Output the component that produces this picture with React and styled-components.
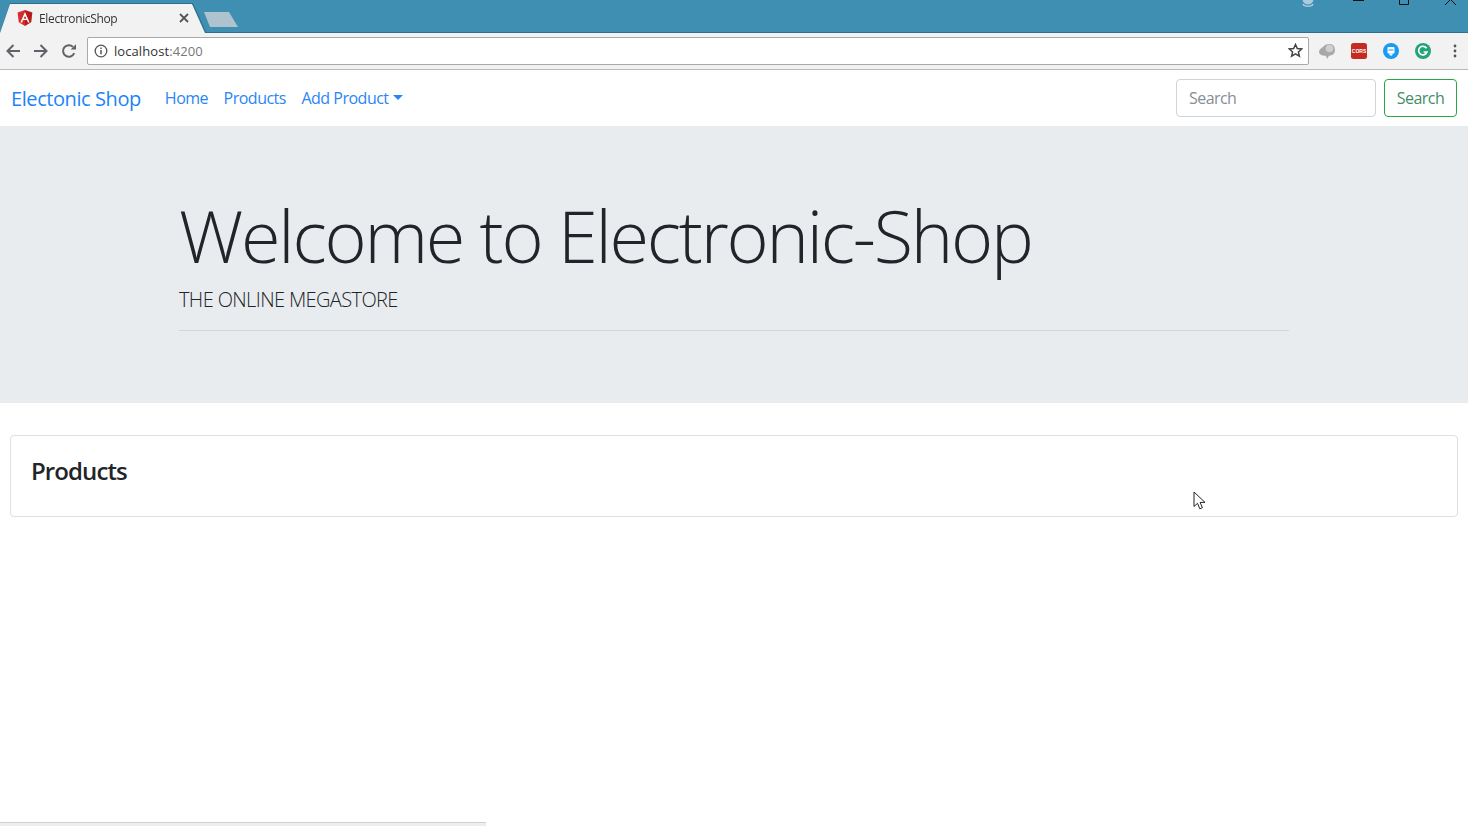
import React from "react";
import styled, { createGlobalStyle } from "styled-components";

const Global = createGlobalStyle`
  html, body { margin: 0; padding: 0; background: #fff; }
  body { font-family: "Open Sans", "Noto Sans", "Liberation Sans", sans-serif; overflow: hidden; }
  * { box-sizing: border-box; }
`;

const Page = styled.div`
  position: relative;
  width: 1468px;
  height: 826px;
  overflow: hidden;
  background: #fff;
`;

const TabBar = styled.div`
  height: 33px;
  background: #3f8fb3;
  display: flex;
  align-items: flex-end;
  border-bottom: 1px solid #2f6f8e;
`;

const TabOutline = styled.div`
  filter: drop-shadow(0 -1px 0 #2f6f8e) drop-shadow(1px 0 0 #2f6f8e);
  margin-bottom: -1px;
  z-index: 1;
`;

const Tab = styled.div`
  width: 205px;
  height: 29px;
  background: #f2f2f2;
  clip-path: polygon(0 100%, 10px 0, 192px 0, 205px 100%);
  display: flex;
  align-items: center;
  padding: 0 16px 1px 17px;
  font-size: 12px;
  letter-spacing: -0.35px;
  color: #333;
`;

const TabTitle = styled.span`
  margin-left: 6px;
  flex: 1;
`;

const NewTab = styled.div`
  width: 34px;
  height: 15px;
  margin: 0 0 5px -1px;
  background: #aec3cd;
  clip-path: polygon(0 0, 25px 0, 34px 100%, 6px 100%);
`;

const WindowControls = styled.div`
  margin-left: auto;
  align-self: flex-start;
  display: flex;
  align-items: flex-start;
  padding-right: 7px;
  svg { display: block; }
`;

const Toolbar = styled.div`
  height: 37px;
  background: #f2f2f2;
  border-bottom: 1px solid #b9b9b9;
  display: flex;
  align-items: center;
  padding: 0 5px 1px 5px;
`;

const NavIcons = styled.div`
  display: flex;
  align-items: center;
  gap: 12px;
  margin-right: 10px;
`;

const Omnibox = styled.div`
  width: 1222px;
  height: 28px;
  background: #fff;
  border: 1px solid #a9a9a9;
  border-radius: 2px;
  display: flex;
  align-items: center;
  padding: 0 5px 0 6px;
  font-size: 13px;
  letter-spacing: 0.08px;
  color: #333;
`;

const Url = styled.span`
  margin-left: 6px;
  flex: 1;
  span { color: #777; }
`;

const Extensions = styled.div`
  display: flex;
  align-items: center;
  margin-left: 10px;
  gap: 16px;
  svg { display: block; }
`;

const DotsSlot = styled.div`
  margin-left: 6px;
`;

const Nav = styled.nav`
  height: 56px;
  background: #fff;
  display: flex;
  align-items: center;
  padding: 0 11px;
`;

const Brand = styled.a`
  font-size: 20px;
  letter-spacing: -0.42px;
  color: #1a84f7;
  margin-right: 24px;
  padding-top: 1px;
`;

const NavLinks = styled.div`
  display: flex;
  gap: 15.5px;
`;

const NavLink = styled.a`
  font-size: 16px;
  letter-spacing: -0.5px;
  color: #2a86f5;
  display: inline-flex;
  align-items: center;
`;

const Caret = styled.i`
  margin-left: 4px;
  margin-bottom: 2px;
  border-top: 5px solid #2a86f5;
  border-left: 5px solid transparent;
  border-right: 5px solid transparent;
`;

const SearchForm = styled.form`
  margin-left: auto;
  display: flex;
  gap: 8px;
`;

const SearchField = styled.div`
  width: 200px;
  height: 38px;
  border: 1px solid #ced4da;
  border-radius: 4px;
  display: flex;
  align-items: center;
  padding: 0 12px;
  font-size: 16px;
  letter-spacing: -0.55px;
  color: #868e96;
`;

const SearchButton = styled.div`
  width: 73px;
  height: 38px;
  border: 1px solid #28a745;
  border-radius: 4px;
  display: flex;
  align-items: center;
  justify-content: center;
  font-size: 16px;
  letter-spacing: -0.55px;
  color: #3f8f68;
`;

const Jumbotron = styled.section`
  height: 277px;
  background: #e9ecef;
  padding: 67px 179px 0;
`;

const Title = styled.h1`
  margin: 0;
  font-weight: 300;
  font-size: 72px;
  line-height: 85px;
  letter-spacing: -2.22px;
  color: #212529;
  white-space: nowrap;
`;

const Lead = styled.p`
  margin: 7px 0 0;
  font-weight: 300;
  font-size: 20px;
  line-height: 30px;
  letter-spacing: -0.62px;
  color: #212529;
`;

const Rule = styled.hr`
  margin: 15px 0 0;
  border: 0;
  border-top: 1px solid #d3d6d9;
`;

const Content = styled.main`
  padding: 32px 10px 0;
`;

const Card = styled.div`
  height: 82px;
  border: 1px solid #dfdfdf;
  border-radius: 4px;
  padding: 19px 20px;
`;

const CardTitle = styled.h2`
  margin: 0;
  font-size: 24px;
  line-height: 32px;
  font-weight: 600;
  letter-spacing: -0.9px;
  color: #212529;
`;

const Cursor = styled.svg`
  position: absolute;
  left: 1193px;
  top: 491px;
`;

const ShelfEdge = styled.div`
  position: absolute;
  left: 0;
  top: 822px;
  width: 486px;
  height: 4px;
  background: #eeeeee;
  border-top: 1px solid #d2d2d2;
`;

const AngularLogo = () => (
  <svg width="16" height="16" viewBox="0 0 16 16">
    <path d="M8 0 .6 2.600l1.200 9.700L8 16z" fill="#d32f2f" />
    <path d="M8 0l7.400 2.600-1.200 9.700L8 16z" fill="#b71c1c" />
    <path d="M8 2 3.400 12.400h1.700l.9-2.300h4l.9 2.300h1.700zM8 5.900l1.400 2.900H6.600z" fill="#fff" />
  </svg>
);

const CloseX = () => (
  <svg width="10" height="10" viewBox="0 0 10 10">
    <path d="M1 1l8 8M9 1l-8 8" stroke="#555" strokeWidth="1.8" />
  </svg>
);

const BackIcon = ({ flip }) => (
  <svg width="16" height="16" viewBox="0 0 16 16" style={flip ? { transform: "scaleX(-1)" } : undefined}>
    <path d="M15 8H2.500M8.500 2 2.500 8l6 6" fill="none" stroke="#5f6368" strokeWidth="2" />
  </svg>
);

const ReloadIcon = () => (
  <svg width="16" height="16" viewBox="0 0 16 16">
    <path d="M13.200 10.200A5.800 5.800 0 1 1 12 3.900" fill="none" stroke="#5f6368" strokeWidth="2" />
    <path d="M9.600 6.600H15V1.200z" fill="#5f6368" />
  </svg>
);

const InfoIcon = () => (
  <svg width="14" height="14" viewBox="0 0 14 14">
    <circle cx="7" cy="7" r="5.800" fill="none" stroke="#555" strokeWidth="1.300" />
    <path d="M7 6v4.200" stroke="#555" strokeWidth="1.500" />
    <path d="M7 3.400v1.600" stroke="#555" strokeWidth="1.500" />
  </svg>
);

const StarIcon = () => (
  <svg width="15" height="15" viewBox="0 0 15 15">
    <path d="M7.500 1.500 9.300 5.600l4.400.4-3.300 2.900 1 4.300-3.900-2.300-3.900 2.300 1-4.300L1.300 6l4.400-.4z" fill="none" stroke="#444" strokeWidth="1.500" />
  </svg>
);

const ChatExt = () => (
  <svg width="16" height="16" viewBox="0 0 16 16">
    <path d="M0 9c0-2.500 2.500-4 4-5 2-3 7-4 10-2 2.500 2.500 2.500 7 .5 9-1 1-3 1.500-4.500 1.700L8 16l-1-3.200C3.500 13 0 11.500 0 9z" fill="#a8a8a8" />
    <circle cx="10.500" cy="5.500" r="3.800" fill="#cfcfcf" />
  </svg>
);

const CorsExt = () => (
  <svg width="16" height="16" viewBox="0 0 16 16">
    <rect width="16" height="16" rx="2.500" fill="#c42c22" />
    <text x="8" y="10" textAnchor="middle" fontSize="5" fontWeight="700" fill="#fff" fontFamily="'Liberation Sans', sans-serif">CORS</text>
  </svg>
);

const BlueExt = () => (
  <svg width="16" height="16" viewBox="0 0 16 16">
    <circle cx="8" cy="8" r="8" fill="#1a9bf0" />
    <rect x="4.500" y="4" width="7" height="6.500" rx="1" fill="#fff" />
    <rect x="5.500" y="6.500" width="5" height="1" fill="#1a9bf0" />
    <path d="M6 10.500h4l-1 2H7z" fill="#fff" />
  </svg>
);

const GrammarlyExt = () => (
  <svg width="16" height="16" viewBox="0 0 16 16">
    <circle cx="8" cy="8" r="8" fill="#22a37a" />
    <path d="M11.600 5.300A4.300 4.300 0 1 0 12 9H8.600" fill="none" stroke="#fff" strokeWidth="1.700" />
  </svg>
);

const MenuDots = () => (
  <svg width="4" height="14" viewBox="0 0 4 14">
    <circle cx="2" cy="2" r="1.400" fill="#555" />
    <circle cx="2" cy="7" r="1.400" fill="#555" />
    <circle cx="2" cy="12" r="1.400" fill="#555" />
  </svg>
);

const WindowIcons = () => (
  <svg width="160" height="8" viewBox="0 0 160 8">
    <circle cx="7" cy="-1" r="5.500" fill="#a9cbdb" />
    <path d="M2 4c1 3 9 3 10 0" fill="none" stroke="#a9cbdb" strokeWidth="1.500" />
    <path d="M52 .5h11" stroke="#111" strokeWidth="1" />
    <path d="M98.500 0v4.500h9V0" fill="none" stroke="#111" />
    <path d="M144 5 149 0M155 5 150 0" stroke="#111" strokeWidth="1" />
  </svg>
);

export default function App() {
  return (
    <Page>
      <Global />
      <TabBar>
        <TabOutline>
          <Tab>
            <AngularLogo />
            <TabTitle>ElectronicShop</TabTitle>
            <CloseX />
          </Tab>
        </TabOutline>
        <NewTab />
        <WindowControls>
          <WindowIcons />
        </WindowControls>
      </TabBar>
      <Toolbar>
        <NavIcons>
          <BackIcon />
          <BackIcon flip />
          <ReloadIcon />
        </NavIcons>
        <Omnibox>
          <InfoIcon />
          <Url>localhost<span>:4200</span></Url>
          <StarIcon />
        </Omnibox>
        <Extensions>
          <ChatExt />
          <CorsExt />
          <BlueExt />
          <GrammarlyExt />
          <DotsSlot><MenuDots /></DotsSlot>
        </Extensions>
      </Toolbar>
      <Nav>
        <Brand>Electonic Shop</Brand>
        <NavLinks>
          <NavLink>Home</NavLink>
          <NavLink>Products</NavLink>
          <NavLink>Add Product<Caret /></NavLink>
        </NavLinks>
        <SearchForm>
          <SearchField>Search</SearchField>
          <SearchButton>Search</SearchButton>
        </SearchForm>
      </Nav>
      <Jumbotron>
        <Title>Welcome to Electronic-Shop</Title>
        <Lead>THE ONLINE MEGASTORE</Lead>
        <Rule />
      </Jumbotron>
      <Content>
        <Card>
          <CardTitle>Products</CardTitle>
        </Card>
      </Content>
      <Cursor width="14" height="20" viewBox="0 0 14 20">
        <path d="M1 1v14.500l3.500-3.200 2.300 5.500 2.600-1.100-2.300-5.300H12z" fill="#fff" stroke="#222" strokeWidth="1" />
      </Cursor>
      <ShelfEdge />
    </Page>
  );
}
